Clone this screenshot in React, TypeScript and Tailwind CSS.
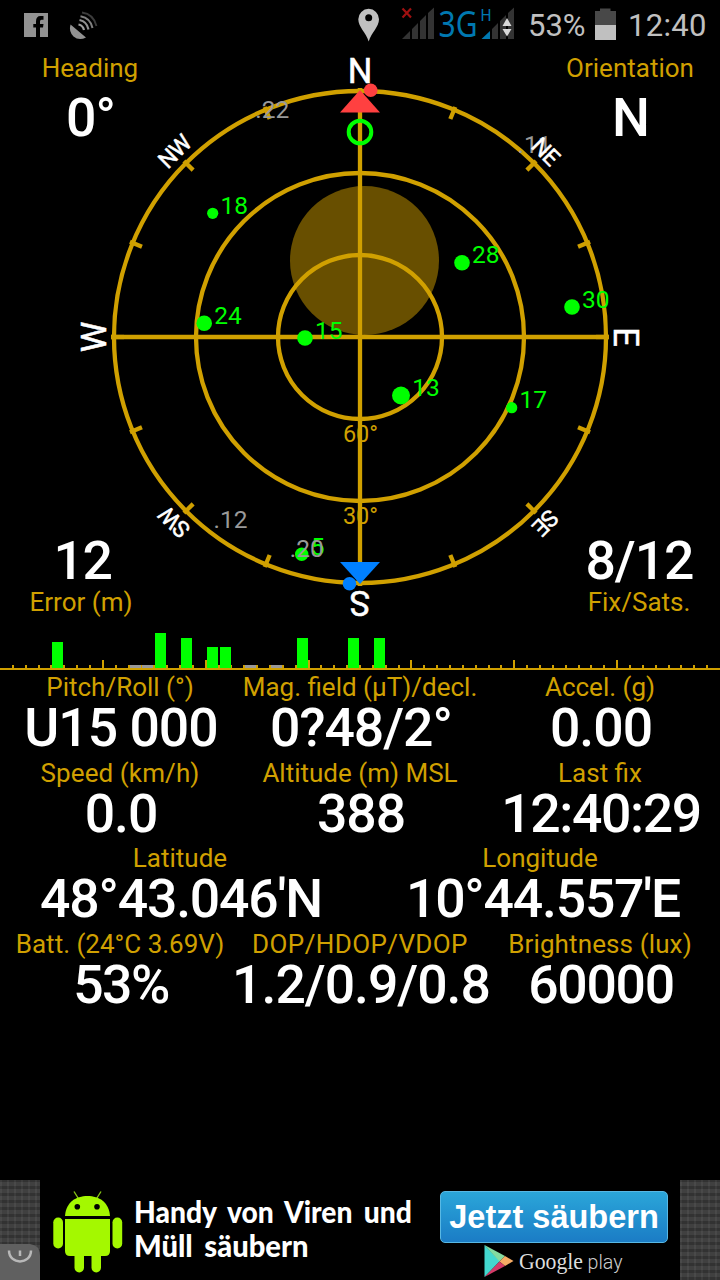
import clsx from 'clsx';

const GOLD = '#d0a000';
const GREEN = '#00ff00';

const satellites = [
  { prn: 18, x: 212.7, y: 213.3, r: 5.6, level: 21 },
  { prn: 24, x: 204.2, y: 323.3, r: 7.8, level: 30 },
  { prn: 15, x: 305, y: 338, r: 7.8, level: 30 },
  { prn: 28, x: 462, y: 262.7, r: 7.8, level: 30 },
  { prn: 30, x: 572, y: 307, r: 7.8, level: 30 },
  { prn: 13, x: 401, y: 395.5, r: 9, level: 35 },
  { prn: 17, x: 511.7, y: 407.7, r: 5.6, level: 21 },
  { prn: 5, x: 301.7, y: 554.3, r: 6.7, level: 26 },
];

// visible but without a usable signal
const weakSatellites = [
  { prn: 22, x: 255.3, y: 118.4 },
  { prn: 11, x: 517.5, y: 152.9 },
  { prn: 12, x: 213.5, y: 528.3 },
  { prn: 20, x: 289.8, y: 557.3 },
];

const directions = ['N', 'NE', 'E', 'SE', 'S', 'SW', 'W', 'NW'];

function StatusBar() {
  return (
    <div className="flex h-[50px] items-center text-[#c0c0c0]">
      <svg width="110" height="50" viewBox="0 0 110 50">
        <rect x="24" y="13" width="24" height="24" fill="#929292" />
        <path d="M36 37V27.500H33.300V24H36V21.500Q36 16 40.500 16H43.500V19.700H41.500Q40 19.700 40 21.500V24H43.500L43 27.500H40V37Z" fill="#000" />
        <path d="M70.500 24.500L86 37.500Q79 41 73.500 36.500Q68.500 31.500 70.500 24.500Z" fill="#929292" />
        <g fill="none">
          <path d="M78.500 24.500Q83 25.500 84 30" stroke="#a0a0a0" strokeWidth="2.200" />
          <path d="M79.500 20Q87 21.500 88.500 29.500" stroke="#929292" strokeWidth="2.200" />
          <path d="M80.500 16.200Q90.500 18 92.500 28" stroke="#808080" strokeWidth="2" />
          <path d="M82 12.500Q93.500 14 96.500 26" stroke="#3c3c3c" strokeWidth="1.800" />
        </g>
      </svg>
      <svg className="ml-auto" width="172" height="50" viewBox="350 0 172 50">
        <path fillRule="evenodd" d="M368.700 41.500C366 32.500 358.300 27 358.300 19.200A10.350 10.350 0 0 1 379 19.200C379 27 371.400 32.500 368.700 41.500ZM368.700 14.200A3.500 3.500 0 1 0 368.700 21.200A3.500 3.500 0 1 0 368.700 14.200Z" fill="#c0c0c0" />
        <path d="M402.500 8.500L411 17.500M411 8.500L402.500 17.500" stroke="#a01010" strokeWidth="2.200" />
        <g fill="#333">
          <path d="M402 39L410 31V39ZM412 29L418 23V39H412ZM420 21L426 15V39H420ZM428 13L434 7.500V39H428Z" />
          <path d="M492 29L498 23V39H492ZM500 21L506 15V39H500ZM508 13L514 7.500V39H508Z" />
        </g>
        <path d="M481.500 39L490 31V39Z" fill="#0078b0" />
        <path d="M502.500 26L507 18L511.500 26ZM502.500 29L507 36.500L511.500 29Z" fill="#d8d8d8" />
        <text x="438.500" y="36.700" fontSize="36.500" textLength="39" lengthAdjust="spacingAndGlyphs" fill="#0078b0" className="font-['Noto_Sans',sans-serif]">3G</text>
        <text x="480.500" y="21.300" fontSize="17" textLength="11" lengthAdjust="spacingAndGlyphs" fill="#0078b0">H</text>
      </svg>
      <span className="ml-[6px] w-[60px] pt-[2px] text-[31px] leading-[50px]">53%</span>
      <svg className="ml-[7px]" width="21" height="50" viewBox="0 0 21 50">
        <path d="M0 11H5V8.500H15.500V11H21V25H0Z" fill="#484848" />
        <rect y="25" width="21" height="15" fill="#c0c0c0" />
      </svg>
      <span className="ml-[12px] w-[92px] pt-[2px] text-[31px] leading-[50px] tracking-[0.3px]">12:40</span>
    </div>
  );
}

function SkyPlot() {
  return (
    <svg className="overflow-visible [grid-area:1/1]" width="720" height="570" viewBox="0 50 720 570">
      <circle cx="364.500" cy="260.500" r="74.500" fill="#684f00" />
      <g fill="none" stroke={GOLD} strokeWidth="4.300">
        {[82, 164, 246].map((r) => (
          <circle key={r} cx="360" cy="337" r={r} />
        ))}
        <path d="M360 88V586M111 337H609" />
        {[...Array(16).keys()].map((i) => (
          <path key={i} d="M360 88V101" transform={`rotate(${i * 22.5} 360 337)`} />
        ))}
      </g>
      <g fill={GOLD} fontSize="23.500" textAnchor="middle">
        <text x="360.500" y="441.900">60°</text>
        <text x="360.500" y="524.200">30°</text>
      </g>
      {satellites.map((s) => (
        <g key={s.prn} fill={GREEN}>
          <circle cx={s.x} cy={s.y} r={s.r} />
          <text x={s.x + s.r + 2.3} y={s.y + 0.7} fontSize="24.500">{s.prn}</text>
        </g>
      ))}
      {weakSatellites.map((s) => (
        <text key={s.prn} x={s.x} y={s.y} fontSize="24.500" fill="#999">.{s.prn}</text>
      ))}
      {directions.map((name, i) => (
        <text
          key={name}
          x="360"
          y="82.700"
          fontSize={name.length === 1 ? 34.5 : 23}
          fill="#fff"
          stroke="#fff"
          strokeWidth="0.500"
          textAnchor="middle"
          className={clsx(name.length > 1 && 'tracking-[-0.800px]')}
          transform={`rotate(${i * 45} 360 337)`}
        >
          {name}
        </text>
      ))}
      <path d="M360 90L380 112.500H340Z" fill="#ff4040" />
      <circle cx="370.700" cy="90.300" r="6.800" fill="#ff4040" />
      <circle cx="360" cy="132" r="11.300" fill="none" stroke={GREEN} strokeWidth="4" />
      <path d="M340 562H380L360 584Z" fill="#0080ff" />
      <circle cx="349.500" cy="583.800" r="6.800" fill="#0080ff" />
    </svg>
  );
}

const labelClass = 'text-[26px] leading-[34px] text-[#d0a000] whitespace-nowrap';
const valueClass = 'text-[53.500px] leading-[48px] font-medium text-white whitespace-nowrap';

function Compass() {
  return (
    <div className="grid h-[570px]">
      <SkyPlot />
      <div className="flex flex-col justify-between text-center [grid-area:1/1]">
        <div className="flex justify-between pt-[1px]">
          <div className="w-[180px]">
            <div className={labelClass}>Heading</div>
            <div className={clsx(valueClass, 'mt-[9px] pl-[1px] tracking-[-1px]')}>0°</div>
          </div>
          <div className="w-[180px]">
            <div className={labelClass}>Orientation</div>
            <div className={clsx(valueClass, 'mt-[9px] pl-[2px]')}>N</div>
          </div>
        </div>
        <div className="flex justify-between pb-[1px]">
          <div className="w-[162px]">
            <div className={clsx(valueClass, 'pl-[3px] tracking-[-1.500px]')}>12</div>
            <div className={labelClass}>Error (m)</div>
          </div>
          <div className="w-[162px]">
            <div className={clsx(valueClass, 'pl-[1px] tracking-[-1px]')}>8/12</div>
            <div className={labelClass}>Fix/Sats.</div>
          </div>
        </div>
      </div>
    </div>
  );
}

function SignalBars() {
  const step = 720 / 56;
  const barX = (prn: number) => Math.floor((prn - 1) * step + 1.45);
  return (
    <svg className="block" width="720" height="50" viewBox="0 620 720 50">
      <g fill={GOLD} shapeRendering="crispEdges">
        {[...Array(55).keys()].map((i) => {
          const major = (i + 1) % 8 === 0;
          return <rect key={i} x={Math.round((i + 1) * step) - 1} y={major ? 660 : 665} width="2" height={major ? 8 : 3} />;
        })}
      </g>
      <g shapeRendering="crispEdges">
        {satellites.map((s) => (
          <rect key={s.prn} x={barX(s.prn)} y={668 - s.level} width="11" height={s.level} fill={GREEN} />
        ))}
        {weakSatellites.map((s) => (
          <rect key={s.prn} x={barX(s.prn)} y="665" width="11" height="3" fill="#999" />
        ))}
        <rect y="668" width="720" height="2" fill={GOLD} />
      </g>
    </svg>
  );
}

type StatProps = { label: string; value: string; labelSpacing?: string; valueSpacing?: string };

function Stat({ label, value, labelSpacing, valueSpacing = 'tracking-[-1px]' }: StatProps) {
  return (
    <div className="flex min-w-0 flex-col items-center">
      <div className={clsx(labelClass, labelSpacing)}>{label}</div>
      <div className={clsx(valueClass, 'pl-[2px]', valueSpacing)}>{value}</div>
    </div>
  );
}

function Stats() {
  return (
    <div className="grid auto-rows-[85.500px] grid-cols-6 *:col-span-2">
      <Stat label="Pitch/Roll (°)" value="U15 000" />
      <Stat label="Mag. field (µT)/decl." value="0?48/2°" />
      <Stat label="Accel. (g)" value="0.00" />
      <Stat label="Speed (km/h)" value="0.0" labelSpacing="tracking-[0.1px]" />
      <Stat label="Altitude (m) MSL" value="388" />
      <Stat label="Last fix" value="12:40:29" valueSpacing="tracking-[-1.400px]" />
      <div className="col-span-6! grid grid-cols-2">
        <Stat label="Latitude" value="48°43.046'N" valueSpacing="tracking-[-1.200px]" />
        <Stat label="Longitude" value="10°44.557'E" valueSpacing="tracking-[-1.200px] pl-[6px]" />
      </div>
      <Stat label="Batt. (24°C 3.69V)" value="53%" valueSpacing="tracking-[-1.500px]" />
      <Stat label="DOP/HDOP/VDOP" value="1.2/0.9/0.8" labelSpacing="tracking-[0.400px]" />
      <Stat label="Brightness (lux)" value="60000" labelSpacing="tracking-[0.120px]" valueSpacing="tracking-[-1.300px]" />
    </div>
  );
}

function Android() {
  return (
    <svg width="72" height="84" viewBox="52 1190 72 84" fill="#a4f800">
      <path d="M74 1191.500L79 1199.500M101 1191.500L96 1199.500" stroke="#86c414" strokeWidth="1.400" />
      <path d="M65 1216C66 1202 76 1196 87.500 1196S109 1202 110 1216Z" />
      <path d="M65 1219H110V1251Q110 1256 105 1256H70Q65 1256 65 1251Z" />
      <rect x="53.300" y="1217.500" width="9.700" height="31" rx="4.800" />
      <rect x="112.500" y="1217.500" width="9.700" height="31" rx="4.800" />
      <rect x="74.500" y="1250" width="9.500" height="22.500" rx="4.700" />
      <rect x="91.500" y="1250" width="9.500" height="22.500" rx="4.700" />
      <circle cx="77.300" cy="1206.800" r="2.800" fill="#000" />
      <circle cx="97" cy="1206.800" r="2.800" fill="#000" />
    </svg>
  );
}

function AdTexture({ tab }: { tab?: boolean }) {
  return (
    <div className="flex w-[40px] items-end bg-[#404040] bg-[repeating-linear-gradient(90deg,#ffffff0d_0_2px,transparent_2px_7px),repeating-linear-gradient(0deg,#00000038_0_3px,transparent_3px_7px)]">
      {tab && (
        <svg width="40" height="36" viewBox="0 0 40 36">
          <path d="M0 0H30Q40 1 40 12V36H0Z" fill="#606060" />
          <path d="M9 6.500C9 21 31 21 31 6.500M20 6.500V12" fill="none" stroke="#b8b8b8" strokeWidth="2.500" />
        </svg>
      )}
    </div>
  );
}

function AdBanner() {
  return (
    <div className="mt-auto flex h-[100px]">
      <AdTexture tab />
      <div className="flex flex-1 pt-[10px] pl-[12px]">
        <Android />
        <div className="ml-[10px] w-[306px] pt-[4px] font-['Lato',sans-serif] text-[31px] leading-[34px] font-black whitespace-nowrap text-white">
          <div className="origin-left scale-x-[0.91] [word-spacing:5px]">Handy von Viren und</div>
          <div className="origin-left scale-x-[0.94] [word-spacing:5px]">Müll säubern</div>
        </div>
        <div className="w-[228px] pt-[1px]">
          <div className="h-[52px] rounded-[5px] border border-[#58b8e4] bg-linear-to-b from-[#2ba6d9] to-[#1b7cc5] text-center font-['Liberation_Sans',Arial,sans-serif] text-[32.500px] leading-[51px] font-bold whitespace-nowrap text-white">
            Jetzt säubern
          </div>
          <svg className="block" width="228" height="37" viewBox="440 1243 228 37">
            <path d="M484.500 1245L500 1261L484.500 1277Z" fill="#43d8cf" />
            <path d="M484.500 1245L505 1256L499.500 1261.500Z" fill="#84dba0" />
            <path d="M505 1256L513.500 1261L505 1266L499.500 1261.500Z" fill="#f6ac65" />
            <path d="M484.500 1277L499.500 1261.500L505 1266Z" fill="#d33b68" />
            <text x="519" y="1268.500" fontSize="24" textLength="64" lengthAdjust="spacingAndGlyphs" fill="#ddd" className="font-['Liberation_Serif',serif]">Google</text>
            <text x="587.500" y="1268.500" fontSize="21" textLength="35" lengthAdjust="spacingAndGlyphs" fill="#ccc" className="font-light">play</text>
          </svg>
        </div>
      </div>
      <AdTexture />
    </div>
  );
}

export default function App() {
  return (
    <div className="flex h-[1280px] w-[720px] flex-col overflow-hidden bg-black font-['Roboto',sans-serif]">
      <StatusBar />
      <Compass />
      <SignalBars />
      <Stats />
      <AdBanner />
    </div>
  );
}
